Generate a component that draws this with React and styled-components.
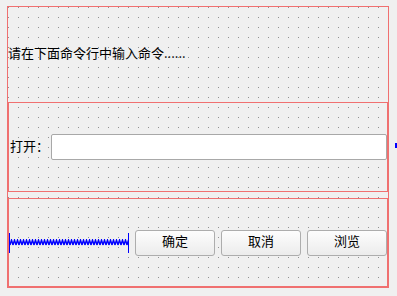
import React from "react";
import styled, { createGlobalStyle } from "styled-components";

const GlobalStyle = createGlobalStyle`
  body {
    margin: 0;
    background: #f0f0f0;
    font-family: "Noto Sans CJK SC", "Noto Sans", sans-serif;
  }
`;

const LAYOUT_RED = "#f07070";

export const Form = styled.div`
  position: relative;
  box-sizing: border-box;
  width: 393px;
  height: 292px;
  padding: 6px 0 0 7px;
  background-color: #f0f0f0;
  background-image: conic-gradient(at 1px 1px, transparent 75%, #929292 0);
  background-size: 10px 10px;
  background-position: 8px 7px;
`;

export const Outer = styled.div`
  box-sizing: border-box;
  width: 382px;
  height: 282px;
  border: 1px solid ${LAYOUT_RED};
  display: flex;
  flex-direction: column;
`;

export const Caption = styled.div`
  box-sizing: border-box;
  height: 95px;
  padding-bottom: 4px;
  display: flex;
  align-items: center;
  font-size: 13px;
  line-height: 16px;
  color: #000;
  white-space: nowrap;
`;

export const Group = styled.div`
  box-sizing: border-box;
  height: ${(p) => p.$h}px;
  margin-top: ${(p) => (p.$spaced ? 6 : 0)}px;
  border: 1px solid ${LAYOUT_RED};
  display: flex;
  align-items: center;
  gap: ${(p) => p.$gap || 0}px;
`;

export const FieldLabel = styled.label`
  width: 41px;
  padding-left: 1px;
  padding-bottom: 3px;
  font-size: 13px;
  line-height: 16px;
  color: #000;
  white-space: nowrap;
`;

export const LineEdit = styled.input`
  flex: 1;
  box-sizing: border-box;
  height: 26px;
  margin: 0;
  border: 1px solid #a8a8a8;
  border-radius: 2px;
  background: #fff;
  outline: none;
`;

export const Spacer = styled.div`
  flex: 1;
  height: 20px;
  border-left: 1px solid #0000ff;
  border-right: 1px solid #0000ff;
  display: flex;
  align-items: center;
`;

export const Button = styled.button`
  box-sizing: border-box;
  width: 80px;
  height: 26px;
  padding: 0 0 3px;
  border: 1px solid #adadad;
  border-radius: 3px;
  background: linear-gradient(#fdfdfd, #ececec);
  font-family: "Noto Sans CJK SC", "Noto Sans", sans-serif;
  font-size: 13px;
  line-height: 16px;
  color: #000;
`;

export const Handle = styled.div`
  position: absolute;
  left: ${(p) => p.$x}px;
  top: ${(p) => p.$y}px;
  width: 5px;
  height: 5px;
  background: #0000ff;
`;

function ZigZag() {
  return (
    <svg width="100%" height="7" style={{ display: "block" }}>
      <defs>
        <pattern id="zz" width="3" height="7" patternUnits="userSpaceOnUse">
          <path d="M0 6 L1.5 1 L3 6" fill="none" stroke="#0000ff" strokeWidth="1.4" />
        </pattern>
      </defs>
      <rect x="0" y="0" width="100%" height="7" fill="url(#zz)" />
    </svg>
  );
}

export default function App() {
  return (
    <>
      <GlobalStyle />
      <Form>
        <Outer>
          <Caption>请在下面命令行中输入命令......</Caption>
          <Group $h={90}>
            <FieldLabel>打开：</FieldLabel>
            <LineEdit />
          </Group>
          <Group $h={89} $spaced $gap={6}>
            <Spacer>
              <ZigZag />
            </Spacer>
            <Button>确定</Button>
            <Button>取消</Button>
            <Button>浏览</Button>
          </Group>
        </Outer>
        <Handle $x={395} $y={143} />
        <Handle $x={195} $y={294} />
        <Handle $x={395} $y={294} />
      </Form>
    </>
  );
}
